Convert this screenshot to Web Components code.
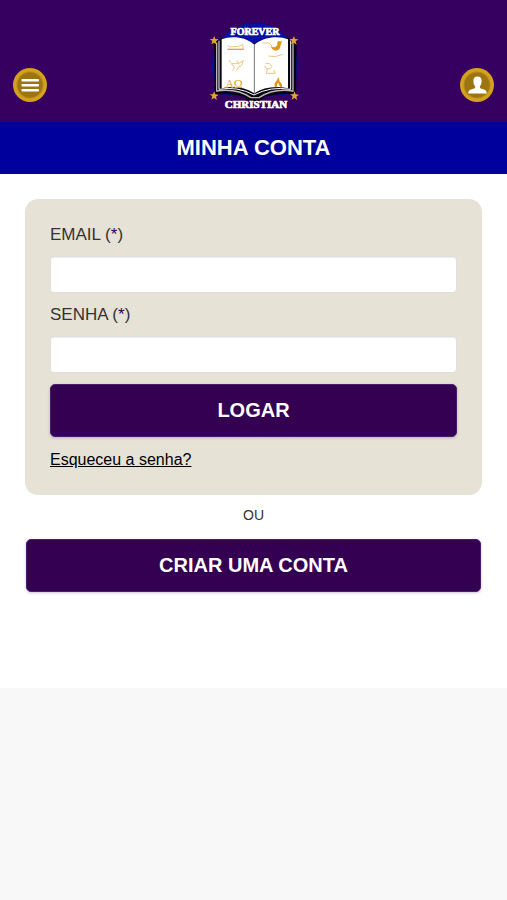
<!DOCTYPE html>
<html lang="pt-BR">
<head>
<meta charset="utf-8">
<meta name="viewport" content="width=device-width, initial-scale=1">
<title>Minha conta</title>
<style>
  html { background: #f8f8f8; }
  body { margin: 0; font-family: "Liberation Sans", Arial, sans-serif; color: #333; }
</style>
</head>
<body>
<account-page></account-page>

<template id="t-page">
  <style>
    :host { display: block; background: #fff; padding-bottom: 96px; }
    main { display: flex; flex-direction: column; padding: 25px 25px 0; }
    p { margin: 0; padding: 10px 0 14px; text-align: center; font-size: 14px; line-height: 20px; }
    .create { padding: 0 1px; }
  </style>
  <site-header></site-header>
  <title-bar>MINHA CONTA</title-bar>
  <main>
    <login-card></login-card>
    <p>OU</p>
    <action-button class="create">CRIAR UMA CONTA</action-button>
  </main>
</template>

<template id="t-header">
  <style>
    :host { display: block; background: #350060; }
    header { display: grid; grid-template-columns: 1fr auto 1fr; align-items: end; padding: 14px 13px 4px; }
    round-button { margin-bottom: 16px; }
    round-button:last-child { justify-self: end; }
  </style>
  <header>
    <round-button label="Menu">
      <svg viewBox="0 0 34 34" width="34" height="34" aria-hidden="true"><g fill="#fff"><rect x="8.500" y="11" width="17.500" height="2.500" rx=".8"/><rect x="8.500" y="16" width="17.500" height="2.500" rx=".8"/><rect x="8.500" y="21" width="17.500" height="2.500" rx=".8"/></g></svg>
    </round-button>
    <brand-logo></brand-logo>
    <round-button label="Minha conta">
      <svg viewBox="0 0 34 34" width="34" height="34" aria-hidden="true"><path fill="#fff" d="M17.500 8.500c3 0 4.300 2 4.100 4.800-.1 2.300-.7 3.900-1.800 5.200 0 1.600.6 2 2.300 2.500 3 .9 4.400 1.200 4.700 4.500H8.200c.3-3.300 1.700-3.600 4.700-4.500 1.700-.5 2.300-.9 2.300-2.500-1.100-1.300-1.700-2.900-1.800-5.200-.2-2.800 1.100-4.800 4.100-4.800z"/></svg>
    </round-button>
  </header>
</template>

<template id="t-round">
  <style>
    :host { display: block; width: 34px; height: 34px; }
    button { display: block; box-sizing: border-box; width: 100%; height: 100%; padding: 0; border: 0; border-radius: 50%;
      background: radial-gradient(circle, #9c7412 0 12px, #d3a11d 14px 17px); cursor: pointer; }
  </style>
  <button type="button"><slot></slot></button>
</template>

<template id="t-logo">
  <style>
    :host { display: block; }
    a, svg { display: block; }
    text { font-family: "Liberation Serif", "Times New Roman", serif; font-weight: bold; font-size: 11px; fill: #fff; stroke: #fff; stroke-width: .7px; text-anchor: middle; }
    .top { font-size: 10px; }
    .greek { font-size: 12px; font-weight: normal; fill: #dfa02c; stroke: none; }
  </style>
  <a href="#" aria-label="Forever Christian">
    <svg viewBox="0 0 108 104" width="108" height="104">
      <g transform="scale(.33333)">
        <circle cx="165" cy="157" r="130" fill="#0710a3"/>
        <path fill="#350060" d="M30 20H92L73 70 42 84 30 160zM34 240L165 248 300 240V312H34z"/>
        <path fill="#080512" d="M42 84L64 72 164 88 265 72 290 84 288 242Q235 236 195 248Q181 262 164 262Q147 262 132 248Q88 236 44 242z"/>
        <path fill="none" stroke="#bdb8b7" stroke-width="4" d="M50 86V231Q109 222 153 251H177Q221 222 279 231V86"/>
        <path fill="none" stroke="#fff" stroke-width="3" d="M57 80V226Q113 216 162 243Q211 216 272 226V80"/>
        <path fill="#fff" d="M65 76C95 64 140 70 163 92V238Q120 211 65 223zM264 76C234 64 189 70 163 92V238Q205 211 264 223z"/>
        <path fill="none" stroke="#777083" stroke-width="3" d="M163 92V240"/>
        <g fill="none" stroke="#edc47c" stroke-width="3">
          <path d="M83 93Q85 101 104 98Q119 97 129 92V106"/>
          <path stroke="#e3a638" stroke-width="4" d="M82 106H131"/>
          <path d="M88 138Q92 152 106 149Q121 148 130 140L124 155Q114 156 110 170M94 149L103 160L98 170M110 140L117 152"/>
          <path d="M187 87H207L216 96M205 126Q226 132 248 121M196 149Q210 144 216 158Q211 168 200 164L193 155M202 164L199 178H226L221 168"/>
        </g>
        <path fill="#df9912" d="M212 97Q226 104 231 94L233 82H246L242 93Q241 110 226 110Q216 108 212 97z"/>
        <path fill="#df9412" d="M236 189Q231 200 226 205Q221 213 225 220H232Q228 212 235 206Q236 214 242 220H246Q247 206 239 203z"/>
        <g fill="#e4a52b">
          <path id="star" d="M43 66L46 75 56 76 48 82 51 92 42 86 34 91 37 81 29 75 39 75z"/>
          <use href="#star" x="239"/><use href="#star" y="166"/><use href="#star" x="241" y="166"/>
        </g>
      </g>
      <text class="greek" x="34" y="74">ΑΩ</text>
      <text class="top" x="55" y="21">FOREVER</text>
      <text x="56" y="94">CHRISTIAN</text>
    </svg>
  </a>
</template>

<template id="t-title">
  <style>
    :host { display: block; background: #00009d; color: #fff; }
    h1 { margin: 0; padding: 12px; font-size: 22px; line-height: 28px; text-align: center; }
  </style>
  <h1><slot></slot></h1>
</template>

<template id="t-card">
  <style>
    :host { display: block; background: #e6e2d6; border-radius: 13px; padding: 25px; }
    form { display: flex; flex-direction: column; }
    form-field { margin-bottom: 11px; }
    a { align-self: flex-start; margin-top: 13px; color: #000; font-size: 16px; line-height: 20px; }
  </style>
  <form>
    <form-field type="email">EMAIL</form-field>
    <form-field type="password">SENHA</form-field>
    <action-button>LOGAR</action-button>
    <a href="#">Esqueceu a senha?</a>
  </form>
</template>

<template id="t-field">
  <style>
    :host { display: block; }
    label { display: block; margin-bottom: 10px; font-size: 17px; line-height: 22px; }
    span { color: #350060; }
    input { display: block; box-sizing: border-box; width: 100%; height: 37px; padding: 0 10px; border: 1px solid #e1dedb; border-radius: 4px;
      background: #fff; box-shadow: inset 0 1px 1px #eee; font: inherit; font-size: 16px; }
  </style>
  <label for="field"><slot></slot> (<span>*</span>)</label>
  <input id="field" required>
</template>

<template id="t-action">
  <style>
    :host { display: block; }
    button { display: block; box-sizing: border-box; width: 100%; padding: 12px; border: 1px solid #4b1b70; border-radius: 5px;
      background: #330052; box-shadow: 0 1px 3px rgb(51 0 82 / 25%); color: #fff; font: bold 20px/27px "Liberation Sans", Arial, sans-serif; cursor: pointer; }
  </style>
  <button type="button"><slot></slot></button>
</template>

<script>
  class TemplateElement extends HTMLElement {
    constructor() {
      super();
      const template = document.getElementById(this.constructor.template);
      this.attachShadow({ mode: 'open' }).append(template.content.cloneNode(true));
    }
  }
  customElements.define('title-bar', class extends TemplateElement { static template = 't-title'; });
  customElements.define('brand-logo', class extends TemplateElement { static template = 't-logo'; });
  customElements.define('action-button', class extends TemplateElement { static template = 't-action'; });
  customElements.define('round-button', class extends TemplateElement {
    static template = 't-round';
    connectedCallback() {
      this.shadowRoot.querySelector('button').setAttribute('aria-label', this.getAttribute('label'));
    }
  });
  customElements.define('form-field', class extends TemplateElement {
    static template = 't-field';
    connectedCallback() {
      this.shadowRoot.querySelector('input').type = this.getAttribute('type');
    }
  });
  customElements.define('site-header', class extends TemplateElement { static template = 't-header'; });
  customElements.define('login-card', class extends TemplateElement { static template = 't-card'; });
  customElements.define('account-page', class extends TemplateElement { static template = 't-page'; });
</script>
</body>
</html>
